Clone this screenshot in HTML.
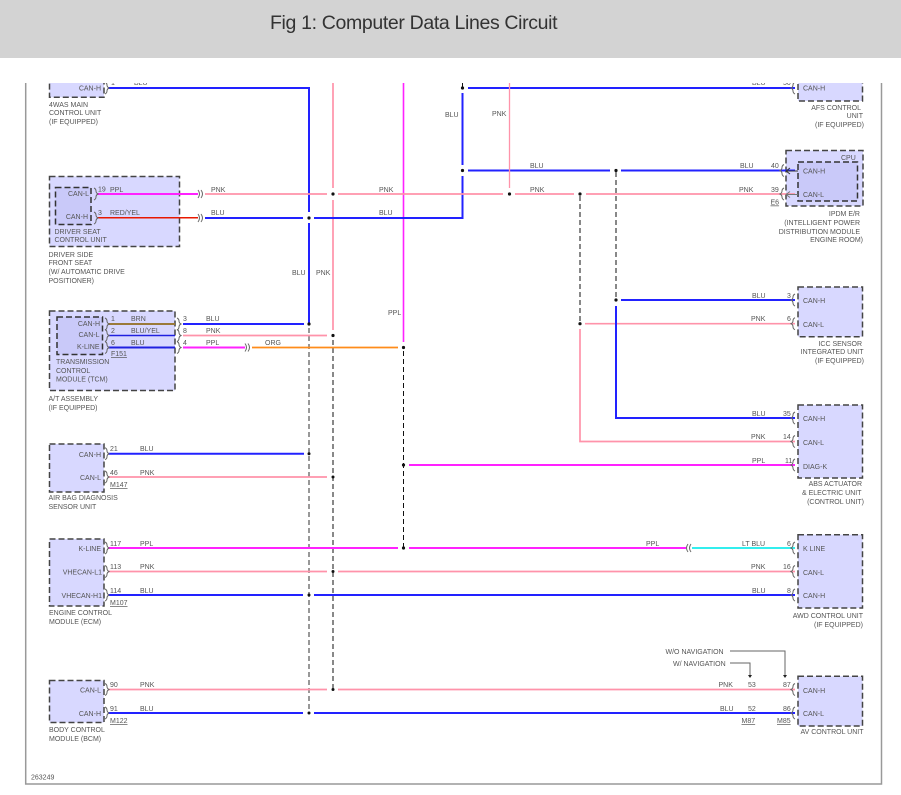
<!DOCTYPE html>
<html><head><meta charset="utf-8"><style>
html,body{margin:0;padding:0;background:#fff;width:901px;height:795px;overflow:hidden}
#hd{position:absolute;left:0;top:0;width:901px;height:58px;background:#d3d3d3}
#hd span{position:absolute;left:270px;top:11px;font:19.5px/24px "Liberation Sans",sans-serif;letter-spacing:-.35px;color:#333;white-space:nowrap}
svg{position:absolute;left:0;top:0;filter:blur(.25px)}
text{font-family:"Liberation Sans",sans-serif;font-size:7px;fill:#555}
.e{text-anchor:end}
.u{text-decoration:underline}
.b{fill:#d8d8ff;stroke:#444;stroke-width:1.5;stroke-dasharray:6 3}
.i{fill:#c9c9f9;stroke:#333;stroke-width:1.5;stroke-dasharray:6 3}
.blu{stroke:#2222ff;stroke-width:2;fill:none}
.pnk{stroke:#ff93aa;stroke-width:1.7;fill:none}
.ppl{stroke:#ff22ff;stroke-width:2;fill:none}
.ds{stroke:#111;stroke-width:1;stroke-dasharray:5 3;fill:none}
.dg{stroke:#777;stroke-width:1.5;stroke-dasharray:5 3;fill:none}
.c{stroke:#666;stroke-width:1;fill:none}
</style></head><body>
<div id="hd"><span>Fig 1: Computer Data Lines Circuit</span></div>
<svg width="901" height="795" viewBox="0 0 901 795">
<defs>
<clipPath id="cp"><rect x="0" y="83" width="901" height="712"/></clipPath>
<path id="cr" d="M0-6q2 1 2 3q0 2 2 3q-2 1-2 3q0 2-2 3" class="c"/>
<path id="cl" d="M0-6q-2 1-2 3q0 2-2 3q2 1 2 3q0 2 2 3" class="c"/>
<path id="jj" d="M0-4q3 4 0 8M3-4q3 4 0 8" class="c"/>
<path id="jl" d="M3-4q-3 4 0 8M6-4q-3 4 0 8" class="c"/>
</defs>
<path d="M25.700 83V784H881.500V83" fill="none" stroke="#999" stroke-width="1.500"/>
<g clip-path="url(#cp)">
<!-- boxes -->
<rect class="b" x="49.500" y="70" width="54.500" height="27.300"/>
<rect class="b" x="798" y="70" width="64.500" height="31"/>
<rect class="b" x="49.500" y="176.500" width="130" height="70"/>
<rect class="i" x="55.500" y="187.500" width="35.500" height="37"/>
<rect class="b" x="49.500" y="311" width="125.500" height="79.500"/>
<rect class="i" x="57" y="317" width="45.500" height="37.500"/>
<rect class="b" x="49.500" y="444" width="54.500" height="48"/>
<rect class="b" x="49.500" y="539" width="54.500" height="67"/>
<rect class="b" x="49.500" y="680.500" width="54.500" height="42"/>
<rect class="b" x="786" y="150.500" width="77" height="55.500"/>
<rect class="i" x="798" y="162" width="59.500" height="39"/>
<rect class="b" x="798" y="287" width="64.500" height="49.700"/>
<rect class="b" x="798" y="405" width="64.500" height="73"/>
<rect class="b" x="798" y="534.700" width="64.500" height="73.300"/>
<rect class="b" x="798" y="676.300" width="64.500" height="49.700"/>

<!-- wires -->
<path class="blu" d="M108 88H309V212M309 223V324"/>
<path class="dg" d="M309 328V713"/>
<path class="pnk" d="M333 83V188M333 200V330"/>
<path class="ds" d="M333 340V689"/>
<path d="M403.500 83V342" stroke="#ff22ff" stroke-width="1.600" fill="none"/>
<path class="ds" d="M403.500 351V548"/>
<path class="blu" d="M462.500 93V165M462.500 176V218H314M468 88H795M468 170.500H610M621 170.500H795"/>
<path class="ds" d="M462.500 83V88"/>
<path d="M509.500 83V188" stroke="#ff93aa" stroke-width="1.300" fill="none"/>
<path class="pnk" d="M205 194H327M338 194H503M515 194H574M586 194H795"/>
<path class="ds" d="M580 196V324M616 172V300"/>
<path class="pnk" d="M585 323.700H795M580 329V441.500H795M183 335.500H327"/>
<path class="blu" d="M621 300H795M616 306V418H795M205 218H303M183 324H304"/>
<path class="ppl" d="M409 465H795M108 548H398M409 548H686M97 194H198M183 347.500H245" />
<path d="M692 548H795" stroke="#33eeee" stroke-width="2" fill="none"/>
<path d="M252 347.500H398" stroke="#ff8c1a" stroke-width="1.700" fill="none"/>
<path d="M97 217.800H198" stroke="#e81800" stroke-width="1.500" fill="none"/>
<path d="M108 324H175" stroke="#9a7a3a" stroke-width="2" fill="none"/>
<path d="M108 335.500H175" stroke="#2020e0" stroke-width="1.500" fill="none"/>
<path d="M108 347.500H175" stroke="#2020e0" stroke-width="2" fill="none"/>
<path class="blu" d="M108 453.700H304M108 595H303M314 595H795M108 713H303M314 713H795" stroke-width="1.700"/>
<path class="pnk" d="M108 477H327M108 571.500H327M338 571.500H795M108 689.500H327M338 689.500H795"/>
<!-- dots -->
<g fill="#111">
<circle cx="309" cy="218" r="1.600"/><circle cx="333" cy="194" r="1.600"/><circle cx="309" cy="324" r="1.600"/><circle cx="333" cy="335.500" r="1.600"/><circle cx="403.500" cy="347.500" r="1.600"/>
<circle cx="462.500" cy="88" r="1.600"/><circle cx="462.500" cy="170.500" r="1.600"/><circle cx="509.500" cy="194" r="1.600"/><circle cx="580" cy="194" r="1.600"/><circle cx="616" cy="170.500" r="1.600"/>
<circle cx="616" cy="300" r="1.600"/><circle cx="580" cy="323.700" r="1.600"/>
<circle cx="309" cy="453.700" r="1.500"/><circle cx="333" cy="477" r="1.500"/><circle cx="403.500" cy="465" r="1.600"/><circle cx="403.500" cy="548" r="1.600"/>
<circle cx="333" cy="571.500" r="1.500"/><circle cx="309" cy="595" r="1.500"/><circle cx="333" cy="689.500" r="1.500"/><circle cx="309" cy="713" r="1.500"/>
</g>
<!-- connectors -->
<g>
<use href="#cr" x="105" y="88"/>
<use href="#cr" x="94" y="194"/><use href="#cr" x="94" y="218"/>
<use href="#jj" x="198" y="194"/><use href="#jj" x="198" y="218"/>
<use href="#cr" x="105" y="324"/><use href="#cr" x="105" y="335.500"/><use href="#cr" x="105" y="347.500"/>
<use href="#cr" x="177" y="324"/><use href="#cr" x="177" y="335.500"/><use href="#cr" x="177" y="347.500"/>
<use href="#jj" x="245" y="347.500"/>
<use href="#cr" x="105" y="453.700"/><use href="#cr" x="105" y="477"/>
<use href="#cr" x="105" y="548"/><use href="#cr" x="105" y="571.500"/><use href="#cr" x="105" y="595"/>
<use href="#cr" x="105" y="689.500"/><use href="#cr" x="105" y="713"/>
<use href="#cl" x="795" y="88"/>
<use href="#cl" x="784" y="170.500"/><use href="#cl" x="784" y="194"/>
<use href="#cl" x="795" y="300"/><use href="#cl" x="795" y="323.700"/>
<use href="#cl" x="795" y="418"/><use href="#cl" x="795" y="441.500"/><use href="#cl" x="795" y="465"/>
<use href="#cl" x="795" y="548"/><use href="#cl" x="795" y="571.500"/><use href="#cl" x="795" y="595"/>
<use href="#cl" x="795" y="689.500"/><use href="#cl" x="795" y="713"/>
<use href="#jl" x="685" y="548"/>
</g>
<path d="M798 171H786M790 168L786 171L790 174" stroke="#333" fill="none"/>
<path d="M798 194.500H786M790 191.500L786 194.500L790 197.500" stroke="#777" fill="none"/>
<path d="M730 651H785V675M730 663H750V675" stroke="#666" fill="none"/>
<path d="M783 675h4l-2 3zM748 675h4l-2 3z" fill="#222"/>

<!-- text: left -->
<text class="e" x="101" y="90.500">CAN-H</text><text x="111" y="85">1</text><text x="134" y="85">BLU</text>
<text x="49" y="107">4WAS MAIN</text><text x="49" y="115">CONTROL UNIT</text><text x="49" y="124">(IF EQUIPPED)</text>
<text class="e" x="89" y="196">CAN-L</text><text class="e" x="88" y="219">CAN-H</text>
<text x="98" y="191.500">19</text><text x="110" y="192">PPL</text><text x="98" y="215">3</text><text x="110" y="215">RED/YEL</text>
<text x="211" y="192">PNK</text><text x="211" y="215">BLU</text>
<text x="54.500" y="234">DRIVER SEAT</text><text x="54.500" y="242">CONTROL UNIT</text>
<text x="48.500" y="257">DRIVER SIDE</text><text x="48.500" y="265">FRONT SEAT</text><text x="48.500" y="274">(W/ AUTOMATIC DRIVE</text><text x="48.500" y="283">POSITIONER)</text>
<text class="e" x="100" y="326">CAN-H</text><text class="e" x="99.500" y="337">CAN-L</text><text class="e" x="99.500" y="349">K-LINE</text>
<text x="111" y="321">1</text><text x="131" y="321">BRN</text><text x="111" y="333">2</text><text x="131" y="333">BLU/YEL</text><text x="111" y="345">6</text><text x="131" y="345">BLU</text>
<text x="111" y="356" class="u">F151</text>
<text x="183" y="321">3</text><text x="206" y="321">BLU</text><text x="183" y="333">8</text><text x="206" y="333">PNK</text><text x="183" y="345">4</text><text x="206" y="345">PPL</text><text x="265" y="345">ORG</text>
<text x="56" y="364">TRANSMISSION</text><text x="56" y="373">CONTROL</text><text x="56" y="381.500">MODULE (TCM)</text>
<text x="48.500" y="401">A/T ASSEMBLY</text><text x="48.500" y="410">(IF EQUIPPED)</text>
<text class="e" x="101" y="457">CAN-H</text><text class="e" x="101" y="480">CAN-L</text>
<text x="110" y="451">21</text><text x="140" y="451">BLU</text><text x="110" y="475">46</text><text x="140" y="475">PNK</text><text x="110" y="487" class="u">M147</text>
<text x="48.500" y="500">AIR BAG DIAGNOSIS</text><text x="48.500" y="509">SENSOR UNIT</text>
<text class="e" x="101" y="551">K-LINE</text><text class="e" x="102" y="574.500">VHECAN-L1</text><text class="e" x="102" y="598">VHECAN-H1</text>
<text x="110" y="546">117</text><text x="140" y="546">PPL</text><text x="110" y="569">113</text><text x="140" y="569">PNK</text><text x="110" y="593">114</text><text x="140" y="593">BLU</text><text x="110" y="605" class="u">M107</text>
<text x="49" y="615">ENGINE CONTROL</text><text x="49" y="624">MODULE (ECM)</text>
<text class="e" x="101" y="692.500">CAN-L</text><text class="e" x="101" y="716">CAN-H</text>
<text x="110" y="687">90</text><text x="140" y="687">PNK</text><text x="110" y="711">91</text><text x="140" y="711">BLU</text><text x="110" y="723" class="u">M122</text>
<text x="49" y="732">BODY CONTROL</text><text x="49" y="741">MODULE (BCM)</text>
<text x="31" y="779.500">263249</text>
<!-- text: middle -->
<text x="292" y="275">BLU</text><text x="316" y="275">PNK</text><text x="388" y="315">PPL</text>
<text x="445" y="117">BLU</text><text x="492" y="116">PNK</text><text x="530" y="168">BLU</text><text x="530" y="192">PNK</text><text x="379" y="192">PNK</text><text x="379" y="215">BLU</text>
<!-- text: right -->
<text x="752" y="85">BLU</text><text x="783" y="85">50</text><text x="803" y="90.500">CAN-H</text>
<text class="e" x="861" y="110">AFS CONTROL</text><text class="e" x="863" y="118">UNIT</text><text class="e" x="864" y="127">(IF EQUIPPED)</text>
<text x="740" y="168">BLU</text><text x="771" y="168">40</text><text x="739" y="192">PNK</text><text x="771" y="192">39</text><text x="770.500" y="204.500" class="u">E6</text>
<text x="841" y="160">CPU</text><text x="803" y="173.500">CAN-H</text><text x="803" y="197">CAN-L</text>
<text class="e" x="860" y="216">IPDM E/R</text><text class="e" x="860" y="225">(INTELLIGENT POWER</text><text class="e" x="860" y="234">DISTRIBUTION MODULE</text><text class="e" x="863" y="242">ENGINE ROOM)</text>
<text x="752" y="298">BLU</text><text x="787" y="298">3</text><text x="803" y="303">CAN-H</text><text x="751" y="321">PNK</text><text x="787" y="321">6</text><text x="803" y="327">CAN-L</text>
<text class="e" x="862" y="346">ICC SENSOR</text><text class="e" x="863.500" y="354">INTEGRATED UNIT</text><text class="e" x="864" y="363">(IF EQUIPPED)</text>
<text x="752" y="416">BLU</text><text x="783" y="416">35</text><text x="803" y="421">CAN-H</text><text x="751" y="439">PNK</text><text x="783" y="439">14</text><text x="803" y="445">CAN-L</text><text x="752" y="463">PPL</text><text x="785" y="463">11</text><text x="803" y="469">DIAG-K</text>
<text class="e" x="862" y="486">ABS ACTUATOR</text><text class="e" x="861.500" y="495">&amp; ELECTRIC UNIT</text><text class="e" x="864" y="504">(CONTROL UNIT)</text>
<text x="646" y="546">PPL</text><text x="742" y="546">LT BLU</text><text x="787" y="546">6</text><text x="803" y="551">K LINE</text><text x="751" y="569">PNK</text><text x="783" y="569">16</text><text x="803" y="575">CAN-L</text><text x="752" y="593">BLU</text><text x="787" y="593">8</text><text x="803" y="598">CAN-H</text>
<text class="e" x="863" y="618">AWD CONTROL UNIT</text><text class="e" x="863" y="627">(IF EQUIPPED)</text>
<text x="665.500" y="654">W/O NAVIGATION</text><text x="673" y="666">W/ NAVIGATION</text>
<text x="718.500" y="687">PNK</text><text x="748" y="687">53</text><text x="783" y="687">87</text><text x="720" y="711">BLU</text><text x="748" y="711">52</text><text x="783" y="711">86</text>
<text x="741.500" y="723" class="u">M87</text><text x="777" y="723" class="u">M85</text>
<text x="803" y="693">CAN-H</text><text x="803" y="716">CAN-L</text><text class="e" x="863.500" y="734">AV CONTROL UNIT</text>
</g>
</svg>
</body></html>
